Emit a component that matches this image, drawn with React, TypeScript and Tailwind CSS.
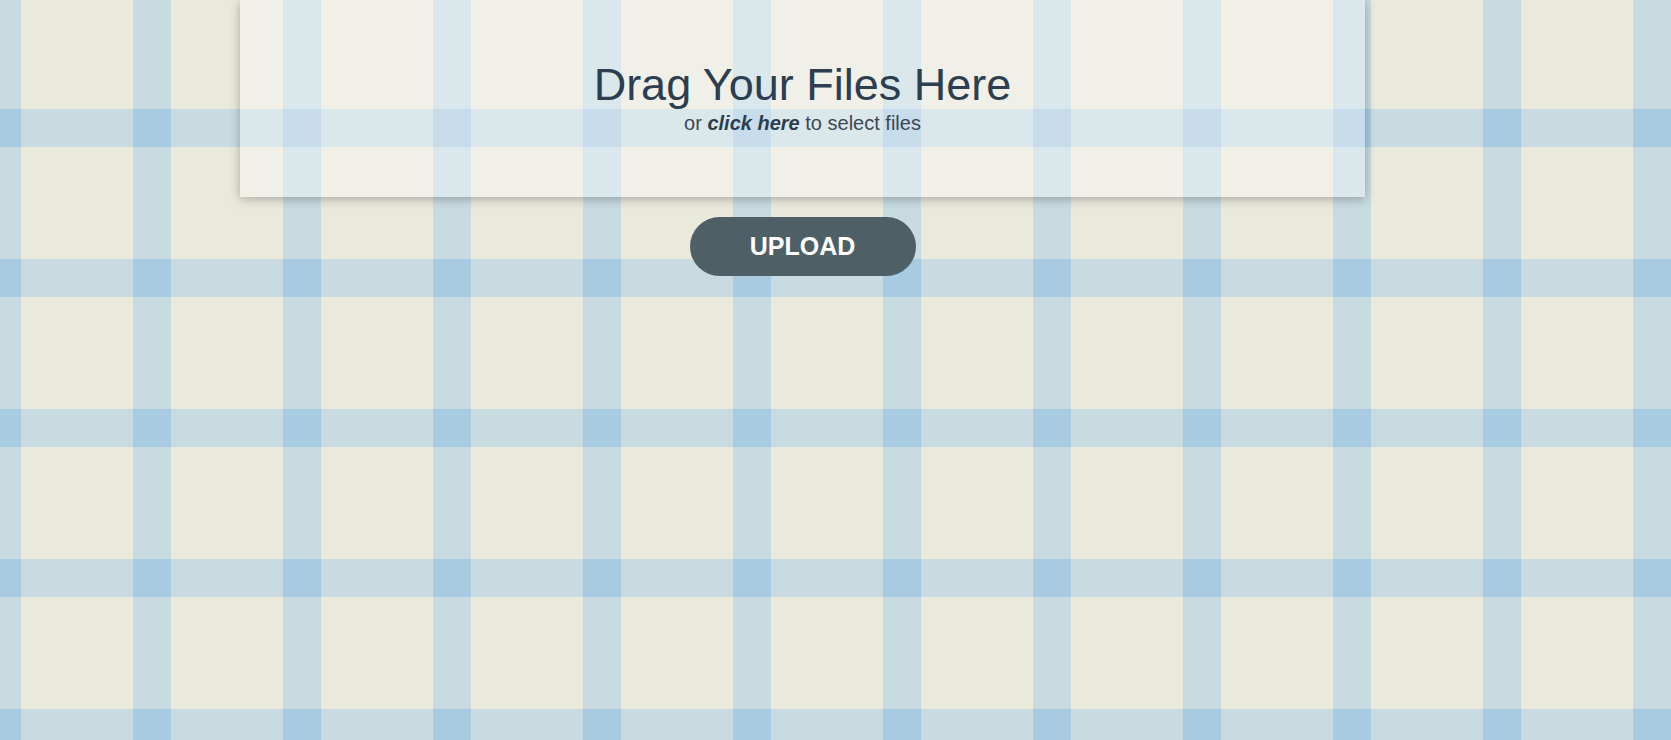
export default function App() {
  return (
    <div className="min-h-screen bg-[#e9e9dc] bg-[image:conic-gradient(at_38px_38px,#c7dbe1_0_90deg,#e9e9dc_0_180deg,#c7dbe1_0_270deg,#a9cbe2_0)] bg-[length:150px_150px] bg-[position:133px_109px] font-['Liberation_Sans',Arial,sans-serif]">
      <div className="ml-[240px] w-[1125px] flex flex-col items-center">
        {/* drop zone */}
        <div className="w-full h-[197px] bg-white/35 shadow-[0_2px_10px_rgba(0,0,0,0.28)] flex flex-col items-center pt-[62px] cursor-pointer">
          <h1 className="text-[45px] leading-none text-[#2c3e50]">Drag Your Files Here</h1>
          <p className="mt-[6px] text-[20px] leading-none text-[#3c4854]">
            or <b className="italic text-[#2c3e50]">click here</b> to select files
          </p>
        </div>

        <button className="mt-5 w-[226px] h-[59px] rounded-full bg-[#4e5f66] text-white font-bold text-[25px] leading-none">
          UPLOAD
        </button>
      </div>
    </div>
  )
}
